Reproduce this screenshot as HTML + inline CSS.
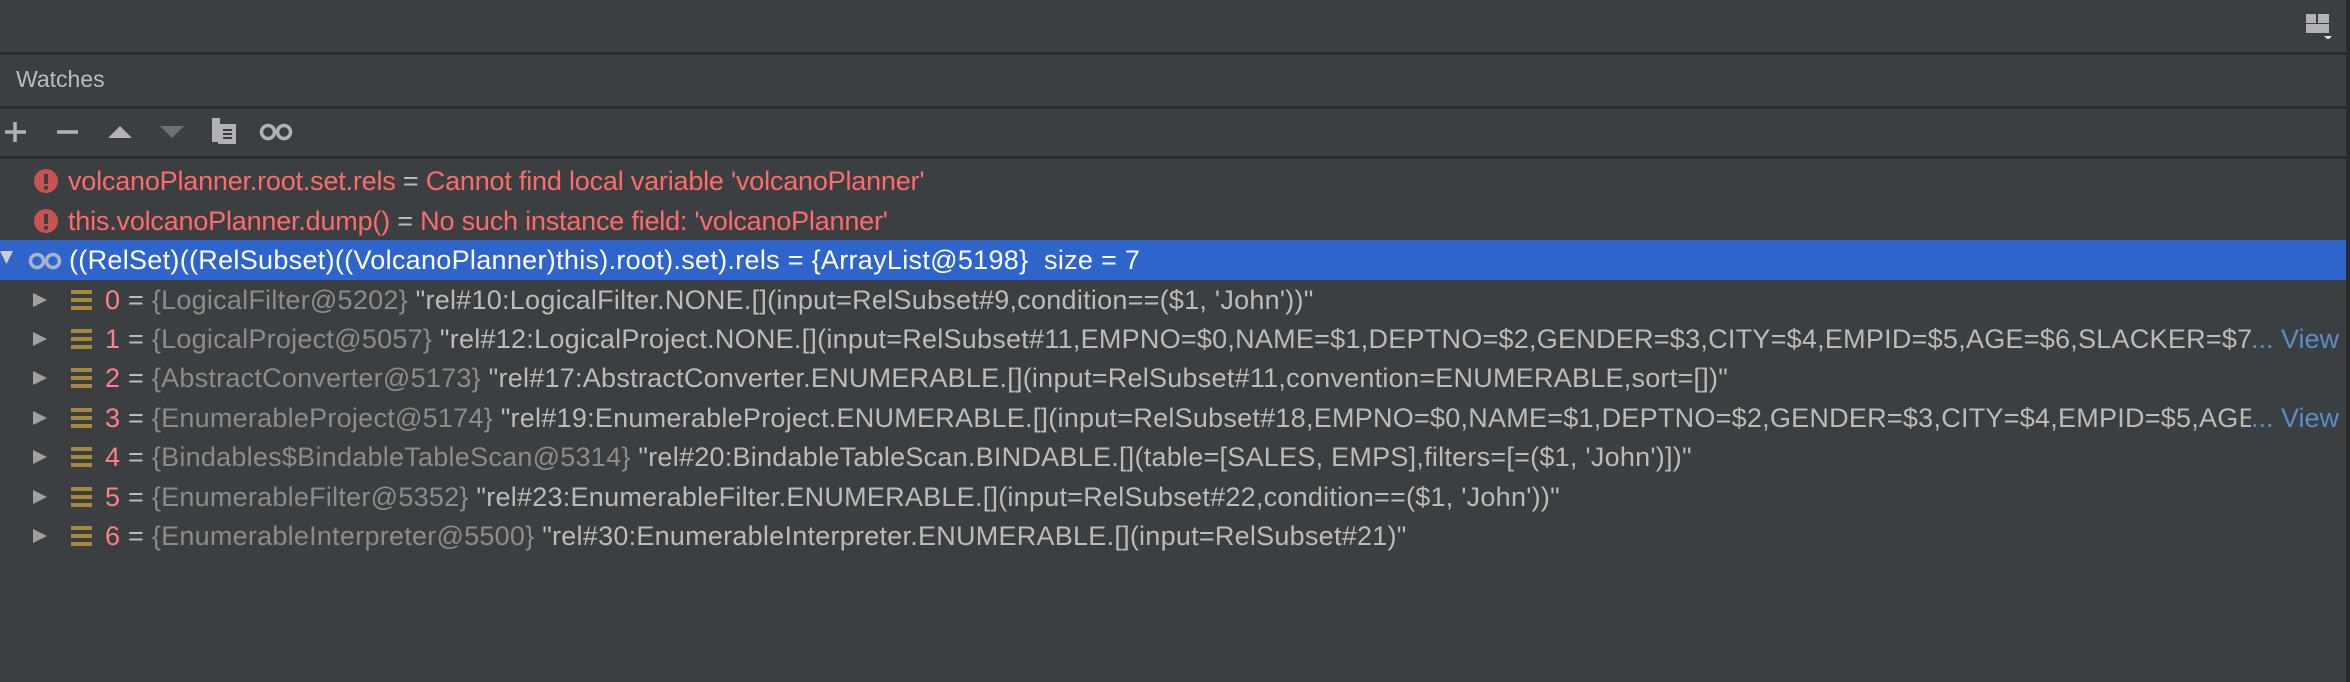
<!DOCTYPE html>
<html><head><meta charset="utf-8"><style>
*{margin:0;padding:0;box-sizing:border-box}
body{width:2350px;height:682px;background:#3c3f41;font-family:"Liberation Sans",sans-serif;position:relative;overflow:hidden}
.line{position:absolute;left:0;width:2346px;height:3px;background:#2b2b2b}
.edge{position:absolute;right:0;top:0;width:4px;height:682px;background:#2b2b2b}
.hdr{position:absolute;left:16px;top:66px;font-size:23px;color:#bbbbbb}
.row{position:absolute;left:0;width:2346px;height:40px;font-size:27px;line-height:40px;white-space:nowrap;color:#bbbbbb}
.err{color:#ff6b68;letter-spacing:-0.2px}
.eq{color:#bbbbbb}
.sel{background:#2f65ca;color:#fff}
.gray{color:#8c8c8c}
.idx{color:#ff8080}
.tri{position:absolute;left:33px;top:13px;width:0;height:0;border-left:14px solid #a0a0a0;border-top:7px solid transparent;border-bottom:7px solid transparent}
.bars{position:absolute;left:71px;top:10px;width:21px;height:20px;background:repeating-linear-gradient(#a8893c 0 4px,transparent 4px 8px)}
.txt{position:absolute;left:105px;top:0;right:70px;overflow:hidden;letter-spacing:0.25px}
.view{position:absolute;right:7px;top:0;color:#5a8dc7}
</style></head><body>
<div class="line" style="top:52px"></div>
<div class="line" style="top:106px"></div>
<div class="line" style="top:156px"></div>
<div class="edge"></div>
<svg style="position:absolute;left:2305px;top:13px" width="28" height="26"><rect x="1" y="1" width="10" height="9" fill="#b0b2b5"/><rect x="13" y="1" width="11" height="9" fill="#b0b2b5"/><rect x="1" y="11" width="23" height="9" fill="#b0b2b5"/><path d="M19 23h8l-4 4z" fill="#e0e0e0"/></svg>
<div class="hdr">Watches</div>
<svg style="position:absolute;left:0;top:112px" width="320" height="40">
<path d="M15 10v20M5 20h21" stroke="#b0b2b5" stroke-width="3.5"/>
<path d="M57 20h21" stroke="#b0b2b5" stroke-width="3.5"/>
<path d="M108 26l12-12 12 12z" fill="#b0b2b5"/>
<path d="M160 14h24l-12 12z" fill="#6e7072"/>
<rect x="212" y="6" width="8" height="24" fill="#b0b2b5"/><rect x="218" y="12" width="18" height="20" fill="#b0b2b5"/><path d="M223 18h9M223 22h9M223 26h9" stroke="#3c3f41" stroke-width="2"/>
<circle cx="268" cy="20" r="6.5" fill="none" stroke="#b0b2b5" stroke-width="3.5"/><circle cx="284" cy="20" r="6.5" fill="none" stroke="#b0b2b5" stroke-width="3.5"/>
</svg>
<div class="row" style="top:161px"><svg style="position:absolute;left:34px;top:8px" width="24" height="24"><circle cx="12" cy="12" r="12" fill="#c75450"/><rect x="10" y="5" width="4" height="10" fill="#3c3f41"/><rect x="10" y="17" width="4" height="3.5" fill="#3c3f41"/></svg><span class="err" style="position:absolute;left:68px">volcanoPlanner.root.set.rels <span class="eq">=</span> Cannot find local variable 'volcanoPlanner'</span></div>
<div class="row" style="top:201px"><svg style="position:absolute;left:34px;top:8px" width="24" height="24"><circle cx="12" cy="12" r="12" fill="#c75450"/><rect x="10" y="5" width="4" height="10" fill="#3c3f41"/><rect x="10" y="17" width="4" height="3.5" fill="#3c3f41"/></svg><span class="err" style="position:absolute;left:68px">this.volcanoPlanner.dump() <span class="eq">=</span> No such instance field: 'volcanoPlanner'</span></div>
<div class="row sel" style="top:240px"><svg style="position:absolute;left:0;top:8px" width="66" height="24"><path d="M0 3h13l-6.5 13z" fill="#c8cdd6"/><circle cx="37" cy="13" r="6.5" fill="none" stroke="#a9b4c8" stroke-width="3.5"/><circle cx="53" cy="13" r="6.5" fill="none" stroke="#a9b4c8" stroke-width="3.5"/></svg><span style="position:absolute;left:69px;letter-spacing:0.3px">((RelSet)((RelSubset)((VolcanoPlanner)this).root).set).rels = {ArrayList@5198}&nbsp; size = 7</span></div>
<div class="row" style="top:280px"><div class="tri"></div><div class="bars"></div><div class="txt"><span class="idx">0</span> = <span class="gray">{LogicalFilter@5202}</span> "rel#10:LogicalFilter.NONE.[](input=RelSubset#9,condition==($1, 'John'))"</div></div>
<div class="row" style="top:319px"><div class="tri"></div><div class="bars"></div><div class="txt" style="right:95px"><span class="idx">1</span> = <span class="gray">{LogicalProject@5057}</span> "rel#12:LogicalProject.NONE.[](input=RelSubset#11,EMPNO=$0,NAME=$1,DEPTNO=$2,GENDER=$3,CITY=$4,EMPID=$5,AGE=$6,SLACKER=$7,MANAGER=$8)"</div><span class="view">... View</span></div>
<div class="row" style="top:358px"><div class="tri"></div><div class="bars"></div><div class="txt"><span class="idx">2</span> = <span class="gray">{AbstractConverter@5173}</span> "rel#17:AbstractConverter.ENUMERABLE.[](input=RelSubset#11,convention=ENUMERABLE,sort=[])"</div></div>
<div class="row" style="top:398px"><div class="tri"></div><div class="bars"></div><div class="txt" style="right:95px"><span class="idx">3</span> = <span class="gray">{EnumerableProject@5174}</span> "rel#19:EnumerableProject.ENUMERABLE.[](input=RelSubset#18,EMPNO=$0,NAME=$1,DEPTNO=$2,GENDER=$3,CITY=$4,EMPID=$5,AGE=$6,SLACKER=$7)"</div><span class="view">... View</span></div>
<div class="row" style="top:437px"><div class="tri"></div><div class="bars"></div><div class="txt"><span class="idx">4</span> = <span class="gray">{Bindables$BindableTableScan@5314}</span> "rel#20:BindableTableScan.BINDABLE.[](table=[SALES, EMPS],filters=[=($1, 'John')])"</div></div>
<div class="row" style="top:477px"><div class="tri"></div><div class="bars"></div><div class="txt"><span class="idx">5</span> = <span class="gray">{EnumerableFilter@5352}</span> "rel#23:EnumerableFilter.ENUMERABLE.[](input=RelSubset#22,condition==($1, 'John'))"</div></div>
<div class="row" style="top:516px"><div class="tri"></div><div class="bars"></div><div class="txt"><span class="idx">6</span> = <span class="gray">{EnumerableInterpreter@5500}</span> "rel#30:EnumerableInterpreter.ENUMERABLE.[](input=RelSubset#21)"</div></div>
</body></html>
